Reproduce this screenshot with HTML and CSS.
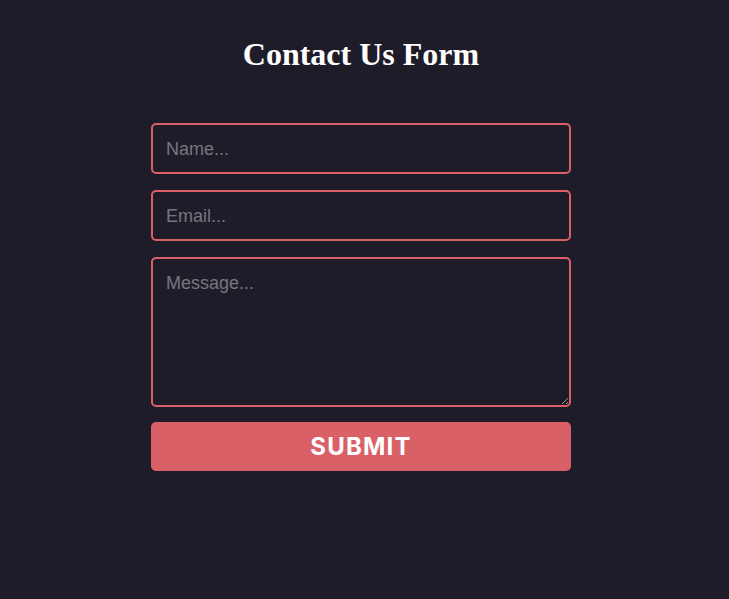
FILE: index.html
```html
<!DOCTYPE html>
<html>
<head>
<meta charset="utf-8">
<link rel="stylesheet" href="styles.css">
</head>
<body>
<div class="page">
  <h1 class="title">Contact Us Form</h1>
  <form class="form">
    <input class="field" type="text" placeholder="Name...">
    <input class="field" type="email" placeholder="Email...">
    <textarea class="field area" placeholder="Message..."></textarea>
    <button class="submit" type="button">SUBMIT</button>
  </form>
</div>
</body>
</html>
```
FILE: styles.css
```css
html, body {
  margin: 0;
  background: #1f1c29;
  height: 100%;
}
.page {
  width: 722px;
  display: flex;
  flex-direction: column;
  align-items: center;
}
.title {
  margin: 34px 0 0;
  font-family: "Liberation Serif", serif;
  font-weight: bold;
  font-size: 32px;
  line-height: 40px;
  color: #ffffff;
}
.form {
  margin-top: 49px;
  width: 420px;
  display: flex;
  flex-direction: column;
  gap: 16px;
}
.field {
  box-sizing: border-box;
  width: 100%;
  height: 51px;
  margin: 0;
  padding: 2px 13px 0;
  border: 2px solid #da5f68;
  border-radius: 5px;
  background: #1f1c29;
  color: #ffffff;
  font-family: "Liberation Sans", sans-serif;
  font-size: 18px;
  outline: none;
}
.field::placeholder {
  color: #76767e;
}
.area {
  height: 150px;
  padding: 14px 13px 13px;
  resize: vertical;
}
.submit {
  margin-top: -1px;
  height: 49px;
  border: none;
  border-radius: 5px;
  background: #da6068;
  color: #ffffff;
  font-family: "Inter", sans-serif;
  font-weight: 700;
  font-size: 24px;
  letter-spacing: 1.2px;
}
```
